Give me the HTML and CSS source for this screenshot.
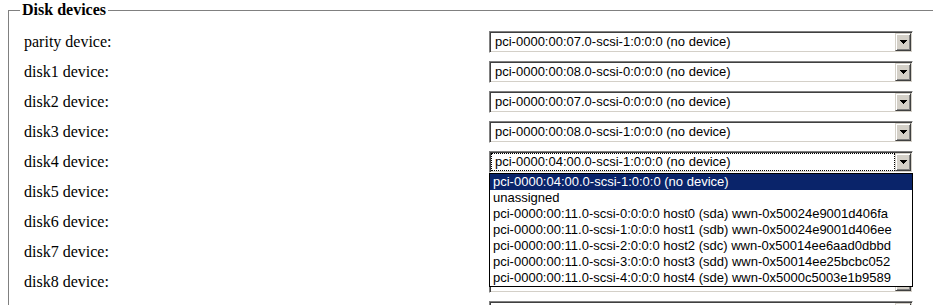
FILE: index.html
```html
<!DOCTYPE html>
<html lang="en">
<head>
    <meta charset="UTF-8">
    <title>Disk devices</title>
    <link rel="stylesheet" href="styles.css">
</head>
<body>
    <fieldset class="disks">
        <legend>Disk devices</legend>
        <div class="row">
            <label class="label">parity device:</label>
            <div class="select"><span class="value">pci-0000:00:07.0-scsi-1:0:0:0 (no device)</span><span class="btn"><svg width="7" height="4"><path d="M0 0h7v1H0zM1 1h5v1H1zM2 2h3v1H2zM3 3h1v1H3z"/></svg></span></div>
        </div>
        <div class="row">
            <label class="label">disk1 device:</label>
            <div class="select"><span class="value">pci-0000:00:08.0-scsi-0:0:0:0 (no device)</span><span class="btn"><svg width="7" height="4"><path d="M0 0h7v1H0zM1 1h5v1H1zM2 2h3v1H2zM3 3h1v1H3z"/></svg></span></div>
        </div>
        <div class="row">
            <label class="label">disk2 device:</label>
            <div class="select"><span class="value">pci-0000:00:07.0-scsi-0:0:0:0 (no device)</span><span class="btn"><svg width="7" height="4"><path d="M0 0h7v1H0zM1 1h5v1H1zM2 2h3v1H2zM3 3h1v1H3z"/></svg></span></div>
        </div>
        <div class="row">
            <label class="label">disk3 device:</label>
            <div class="select"><span class="value">pci-0000:00:08.0-scsi-1:0:0:0 (no device)</span><span class="btn"><svg width="7" height="4"><path d="M0 0h7v1H0zM1 1h5v1H1zM2 2h3v1H2zM3 3h1v1H3z"/></svg></span></div>
        </div>
        <div class="row">
            <label class="label">disk4 device:</label>
            <div class="select open"><span class="value">pci-0000:04:00.0-scsi-1:0:0:0 (no device)</span><span class="btn"><svg width="7" height="4"><path d="M0 0h7v1H0zM1 1h5v1H1zM2 2h3v1H2zM3 3h1v1H3z"/></svg></span>
                <div class="list">
                    <div class="opt sel">pci-0000:04:00.0-scsi-1:0:0:0 (no device)</div>
                    <div class="opt">unassigned</div>
                    <div class="opt">pci-0000:00:11.0-scsi-0:0:0:0 host0 (sda) wwn-0x50024e9001d406fa</div>
                    <div class="opt">pci-0000:00:11.0-scsi-1:0:0:0 host1 (sdb) wwn-0x50024e9001d406ee</div>
                    <div class="opt">pci-0000:00:11.0-scsi-2:0:0:0 host2 (sdc) wwn-0x50014ee6aad0dbbd</div>
                    <div class="opt">pci-0000:00:11.0-scsi-3:0:0:0 host3 (sdd) wwn-0x50014ee25bcbc052</div>
                    <div class="opt">pci-0000:00:11.0-scsi-4:0:0:0 host4 (sde) wwn-0x5000c5003e1b9589</div>
                </div>
            </div>
        </div>
        <div class="row">
            <label class="label">disk5 device:</label>
            <div class="select"><span class="value"></span><span class="btn"><svg width="7" height="4"><path d="M0 0h7v1H0zM1 1h5v1H1zM2 2h3v1H2zM3 3h1v1H3z"/></svg></span></div>
        </div>
        <div class="row">
            <label class="label">disk6 device:</label>
            <div class="select"><span class="value"></span><span class="btn"><svg width="7" height="4"><path d="M0 0h7v1H0zM1 1h5v1H1zM2 2h3v1H2zM3 3h1v1H3z"/></svg></span></div>
        </div>
        <div class="row">
            <label class="label">disk7 device:</label>
            <div class="select"><span class="value"></span><span class="btn"><svg width="7" height="4"><path d="M0 0h7v1H0zM1 1h5v1H1zM2 2h3v1H2zM3 3h1v1H3z"/></svg></span></div>
        </div>
        <div class="row">
            <label class="label">disk8 device:</label>
            <div class="select"><span class="value"></span><span class="btn"><svg width="7" height="4"><path d="M0 0h7v1H0zM1 1h5v1H1zM2 2h3v1H2zM3 3h1v1H3z"/></svg></span></div>
        </div>
        <div class="row">
            <label class="label"></label>
            <div class="select"><span class="value"></span><span class="btn"><svg width="7" height="4"><path d="M0 0h7v1H0zM1 1h5v1H1zM2 2h3v1H2zM3 3h1v1H3z"/></svg></span></div>
        </div>
    </fieldset>
</body>
</html>
```

FILE: styles.css
```css
html, body {
    height: 100%;
    overflow: hidden;
}
body {
    margin: 0;
    padding: 0 0 0 8px;
    background-color: #ffffff;
    color: #000000;
    font-family: "Liberation Serif", "Times New Roman", serif;
}
.disks {
    margin: 0;
    width: 960px;
    min-width: 0;
    border: 1px solid #808080;
    padding: 7px 0 0 15px;
}
.disks legend {
    margin-left: -4px;
    padding: 0 2px;
    font-weight: bold;
    font-size: 16px;
    line-height: 20px;
}
.row {
    display: flex;
    align-items: center;
    height: 30px;
}
.label {
    width: 465px;
    font-size: 16px;
}
.select {
    position: relative;
    display: flex;
    width: 424px;
    height: 22px;
    box-sizing: border-box;
    padding: 1px;
    border: 1px solid;
    border-color: #808080 #ffffff #ffffff #808080;
    box-shadow: inset 1px 1px #404040, inset -1px -1px #d4d0c8;
    background-color: #ffffff;
    font-family: "Liberation Sans", Arial, sans-serif;
    font-size: 13px;
}
.value {
    flex: 1;
    padding-left: 3px;
    border: 1px solid transparent;
    line-height: 16px;
    white-space: nowrap;
    overflow: hidden;
}
.open .value {
    border: 1px dotted #000000;
}
.btn {
    width: 16px;
    height: 18px;
    box-sizing: border-box;
    display: flex;
    align-items: center;
    justify-content: center;
    background-color: #d4d0c8;
    border: 1px solid;
    border-color: #d4d0c8 #404040 #404040 #d4d0c8;
    box-shadow: inset 1px 1px #ffffff, inset -1px -1px #808080;
}
.btn svg {
    display: block;
    fill: #000000;
}
.list {
    position: absolute;
    top: calc(100% + 1px);
    left: -1px;
    z-index: 2;
    width: 424px;
    box-sizing: border-box;
    border: 1px solid #000000;
    background-color: #ffffff;
}
.opt {
    height: 16px;
    line-height: 16px;
    padding-left: 3px;
    white-space: nowrap;
    overflow: hidden;
}
.opt.sel {
    background-color: #0a246a;
    color: #ffffff;
}
```
